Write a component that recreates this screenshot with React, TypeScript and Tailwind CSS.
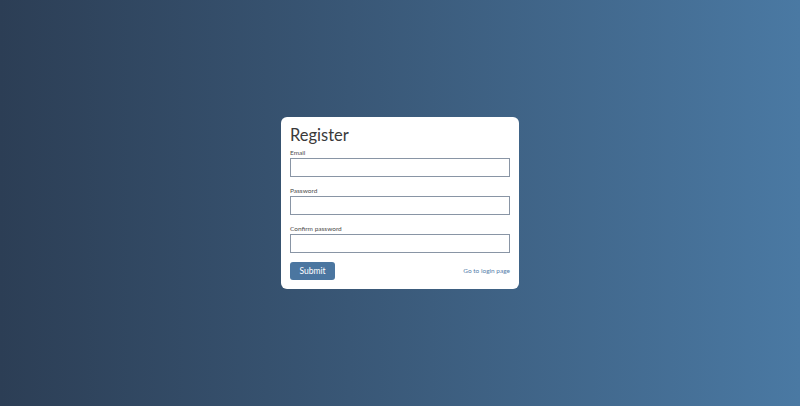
export default function App() {
  return (
    <div className="w-full h-[406px] flex items-center justify-center bg-gradient-to-r from-[#2c3e55] to-[#4a79a3] font-['Lato',sans-serif]">
      <form className="w-[238px] h-[172px] bg-white rounded-md px-[9px] pt-[6px] pb-[9px] flex flex-col">
        <h1 className="text-[16.5px] leading-[24px] text-[#3a3a3a]">Register</h1>
        <label className="text-[6.5px] leading-[11px] text-[#4d4d4d]">Email</label>
        <input type="email" className="h-[19px] border border-[#8995a5]" />
        <label className="text-[6.5px] leading-[11px] text-[#4d4d4d] mt-[8px]">Password</label>
        <input type="password" className="h-[19px] border border-[#8995a5]" />
        <label className="text-[6.5px] leading-[11px] text-[#4d4d4d] mt-[8px]">Confirm password</label>
        <input type="password" className="h-[19px] border border-[#8995a5]" />
        <div className="flex items-center justify-between mt-[9px]">
          <button type="button" className="w-[45px] h-[18px] rounded-[3px] bg-[#4b76a0] text-white text-[8.5px]">Submit</button>
          <a href="#" className="text-[6.5px] text-[#5580ab]">Go to login page</a>
        </div>
      </form>
    </div>
  );
}
